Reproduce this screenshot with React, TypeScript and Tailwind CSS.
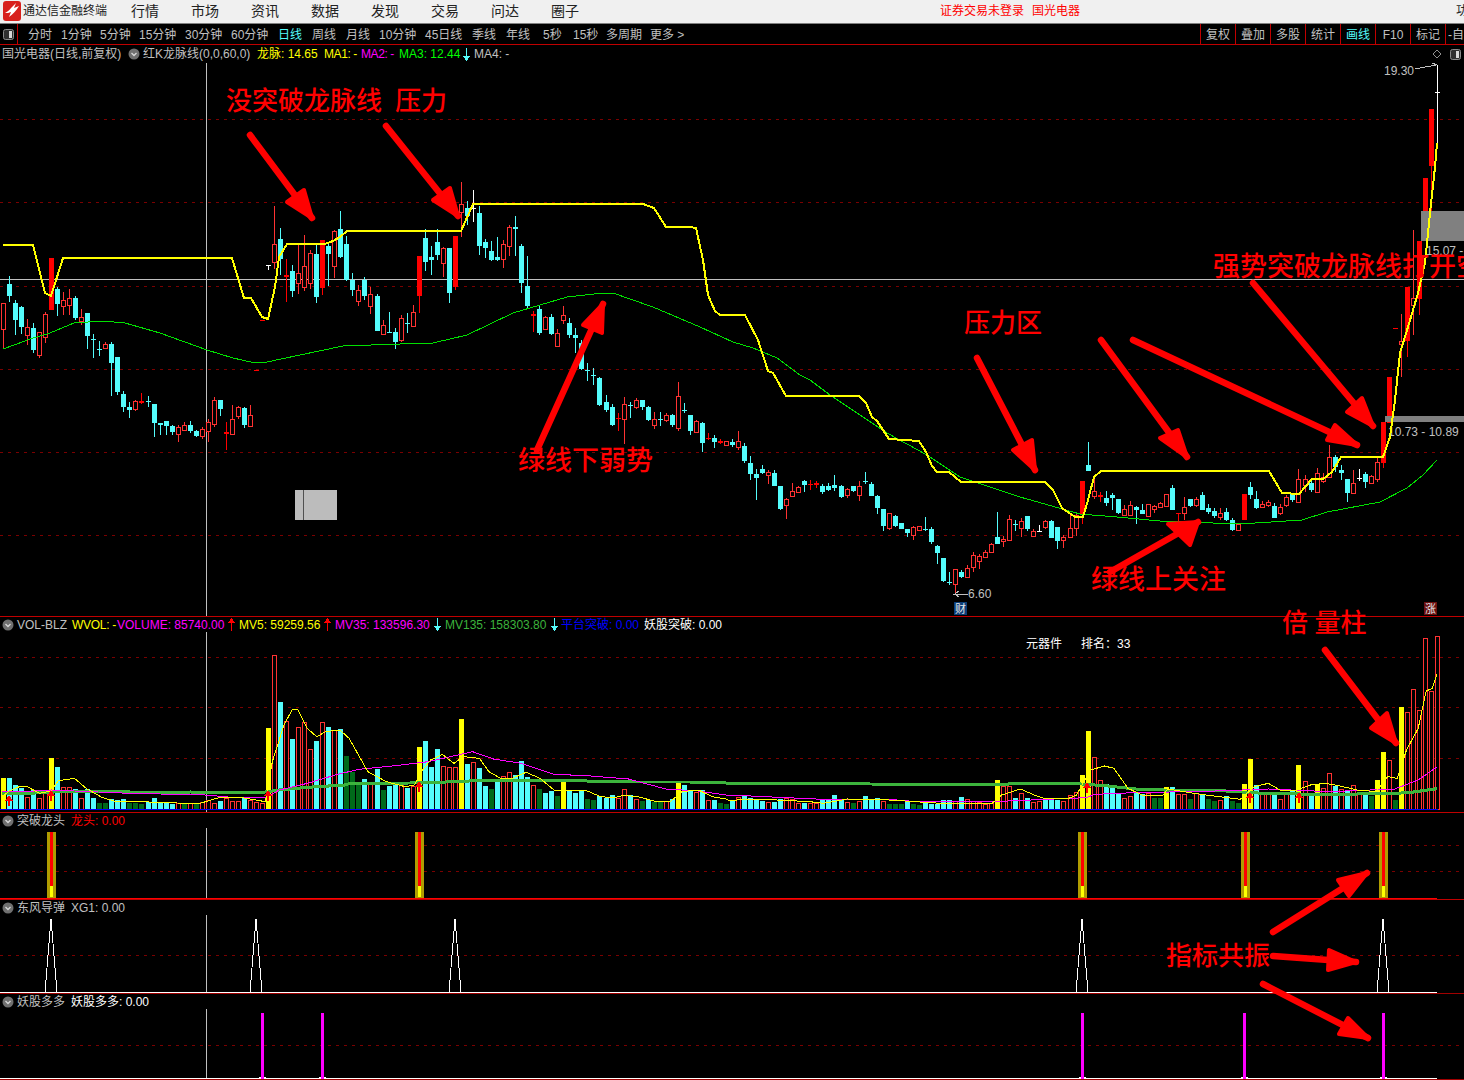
import React from "react";

type Row = [string, number, number, number, number];

const CYAN = "#54fcfc";
const HOLLOW = "#ff3232";
const GRID = "#7a0000";
const CROSS = "#c0c0c0";

// zoomed y values: y = base + v / 3
const groups: { base: number; rows: Row[] }[] = [
  {
    base: 180,
    rows: [
      ["r", 370, 448, 370, 508], ["c", 312, 348, 288, 365], ["c", 370, 420, 360, 465], ["c", 381, 440, 378, 462],
      ["r", 442, 465, 418, 495], ["c", 445, 510, 430, 520], ["r", 457, 524, 457, 533], ["r", 403, 470, 395, 488],
      ["R", 234, 390, 234, 390], ["c", 327, 372, 320, 408], ["r", 361, 377, 335, 405], ["r", 355, 374, 327, 405],
      ["c", 354, 414, 348, 420], ["r", 412, 422, 388, 435], ["c", 400, 468, 400, 507], ["c", 478, 480, 462, 533],
      ["c", 508, 510, 484, 528], ["r", 493, 503, 487, 507], ["c", 492, 548, 487, 648], ["c", 531, 636, 531, 645],
      ["c", 642, 681, 633, 696], ["c", 681, 690, 665, 714], ["r", 664, 686, 660, 692], ["R", 664, 668, 640, 672],
      ["c", 664, 666, 648, 680], ["c", 672, 729, 672, 771], ["c", 729, 735, 729, 765], ["c", 723, 738, 723, 765],
      ["c", 738, 756, 735, 765], ["r", 742, 761, 735, 786], ["r", 736, 749, 726, 752], ["c", 735, 753, 723, 758],
      ["c", 753, 768, 750, 770], ["r", 747, 767, 740, 777], ["r", 727, 752, 716, 786], ["r", 660, 732, 652, 741],
      ["c", 660, 687, 660, 708], ["R", 757, 763, 726, 810], ["r", 717, 762, 675, 762], ["r", 681, 708, 678, 717],
      ["c", 684, 735, 681, 744], ["r", 706, 738, 675, 738], ["R", 570, 573, 570, 573], ["R", 420, 423, 420, 423],
      ["w", 256, 258, 256, 270], ["r", 192, 245, 78, 267], ["c", 177, 237, 144, 285], ["R", 285, 291, 237, 366],
      ["c", 273, 333, 255, 351], ["r", 280, 308, 195, 342], ["r", 259, 320, 165, 333], ["r", 219, 308, 210, 327],
      ["c", 222, 351, 192, 369], ["R", 180, 324, 180, 345], ["c", 198, 222, 192, 318], ["r", 153, 258, 150, 294],
      ["c", 147, 231, 93, 234], ["c", 192, 300, 168, 303], ["c", 300, 330, 279, 348], ["r", 330, 362, 315, 378],
      ["c", 299, 348, 291, 360], ["r", 343, 377, 321, 402], ["c", 348, 453, 342, 453], ["r", 436, 461, 420, 461],
      ["c", 455, 457, 396, 457], ["c", 456, 486, 445, 507], ["r", 415, 479, 405, 485], ["c", 430, 432, 400, 460],
      ["r", 397, 438, 376, 440], ["R", 228, 347, 228, 399], ["c", 175, 245, 148, 273], ["c", 232, 240, 198, 285],
      ["c", 186, 225, 148, 240], ["r", 205, 250, 200, 291], ["c", 204, 339, 204, 369], ["R", 168, 321, 168, 330],
      ["r", 72, 95, 6, 171], ["c", 84, 108, 63, 135], ["w", 84, 86, 30, 126], ["c", 99, 198, 78, 225],
      ["c", 186, 204, 178, 234], ["c", 213, 240, 183, 243], ["c", 231, 240, 171, 243], ["r", 193, 236, 180, 264],
      ["r", 142, 199, 135, 228], ["c", 141, 147, 108, 228], ["c", 198, 309, 192, 339], ["c", 318, 378, 228, 385],
      ["R", 402, 407, 393, 456], ["c", 387, 459, 378, 465], ["r", 411, 447, 408, 450], ["c", 411, 462, 402, 465],
      ["r", 459, 497, 447, 497], ["r", 405, 420, 378, 432], ["c", 429, 465, 414, 474], ["c", 465, 473, 444, 520],
      ["c", 490, 567, 480, 570], ["c", 570, 573, 549, 603], ["c", 585, 588, 564, 615], ["c", 594, 675, 590, 678],
      ["c", 666, 690, 645, 696], ["c", 681, 735, 672, 738], ["R", 714, 718, 699, 753], ["r", 672, 718, 651, 792],
      ["c", 675, 678, 666, 714], ["r", 660, 680, 654, 687], ["c", 660, 681, 660, 690], ["c", 681, 720, 678, 723],
      ["r", 718, 735, 696, 747], ["c", 716, 719, 696, 738], ["r", 706, 720, 699, 726], ["c", 705, 735, 702, 741],
      ["r", 648, 744, 606, 753], ["c", 689, 692, 669, 699], ["c", 705, 753, 705, 765], ["r", 723, 756, 720, 756],
      ["c", 729, 789, 726, 816], ["R", 774, 778, 759, 780], ["c", 774, 786, 765, 804], ["R", 784, 788, 777, 792],
      ["r", 784, 794, 784, 794], ["c", 786, 794, 777, 800], ["r", 784, 801, 753, 810],
    ],
  },
  {
    base: 430,
    rows: [["c", 48, 93, 39, 99], ["c", 99, 132, 78, 150], ["c", 132, 144, 117, 210]],
  },
  {
    base: 380,
    rows: [
      ["c", 268, 280, 255, 282], ["r", 276, 286, 270, 312], ["c", 279, 318, 270, 318], ["c", 318, 387, 318, 390],
      ["r", 358, 375, 354, 417], ["r", 334, 347, 309, 347], ["r", 321, 336, 318, 339], ["c", 303, 315, 300, 336],
      ["R", 312, 316, 300, 330], ["R", 310, 314, 303, 324], ["c", 318, 336, 312, 342], ["c", 318, 330, 309, 333],
      ["c", 315, 324, 285, 333], ["c", 318, 351, 315, 354], ["r", 327, 345, 324, 354], ["c", 318, 333, 318, 336],
      ["r", 318, 346, 303, 363], ["c", 302, 305, 276, 312], ["c", 312, 348, 306, 348], ["c", 348, 384, 345, 402],
      ["c", 387, 438, 387, 453], ["r", 400, 444, 400, 450], ["c", 408, 438, 405, 441], ["c", 429, 447, 429, 447],
      ["c", 447, 459, 447, 471], ["r", 441, 465, 438, 480], ["r", 439, 449, 439, 449], ["c", 446, 449, 411, 453],
      ["c", 447, 486, 441, 492], ["c", 498, 519, 495, 552], ["c", 534, 603, 534, 606], ["c", 606, 609, 576, 615],
      ["r", 568, 613, 568, 640], ["c", 576, 591, 570, 594], ["r", 565, 590, 555, 590], ["r", 525, 560, 516, 576],
      ["r", 528, 543, 522, 566], ["r", 516, 531, 510, 534], ["r", 492, 517, 489, 519], ["c", 471, 492, 396, 492],
      ["r", 478, 484, 468, 500], ["r", 418, 480, 405, 480], ["c", 432, 435, 420, 453], ["r", 423, 444, 414, 471],
      ["c", 408, 447, 408, 452], ["r", 453, 467, 447, 468], ["w", 452, 455, 435, 455], ["r", 423, 442, 420, 448],
      ["c", 423, 474, 420, 474], ["c", 441, 483, 441, 507], ["r", 471, 481, 465, 504], ["r", 444, 471, 405, 471],
      ["r", 405, 444, 396, 468], ["R", 303, 405, 303, 432], ["c", 255, 273, 186, 273], ["r", 334, 348, 294, 357],
      ["R", 346, 351, 336, 366], ["c", 354, 369, 333, 378], ["c", 345, 354, 340, 390], ["c", 357, 399, 357, 402],
      ["r", 387, 405, 375, 405], ["r", 376, 404, 363, 405], ["c", 381, 390, 378, 432], ["c", 390, 402, 372, 402],
      ["r", 373, 408, 372, 408], ["r", 378, 386, 375, 399],
    ],
  },
  {
    base: 60,
    rows: [
      ["r", 1330, 1340, 1325, 1345], ["r", 1303, 1337, 1303, 1340], ["c", 1285, 1350, 1275, 1350], ["R", 1360, 1363, 1360, 1390],
      ["r", 1340, 1358, 1312, 1380], ["c", 1318, 1338, 1316, 1340], ["r", 1316, 1334, 1310, 1340], ["c", 1305, 1350, 1296, 1350],
      ["c", 1344, 1356, 1332, 1362], ["c", 1354, 1368, 1345, 1375], ["r", 1359, 1372, 1345, 1380], ["c", 1355, 1380, 1345, 1382],
      ["c", 1380, 1410, 1375, 1412], ["r", 1392, 1410, 1388, 1414], ["R", 1302, 1380, 1302, 1380], ["c", 1280, 1305, 1266, 1318],
      ["c", 1317, 1345, 1293, 1347], ["r", 1332, 1340, 1323, 1342], ["r", 1325, 1336, 1320, 1340], ["c", 1337, 1373, 1330, 1375],
      ["r", 1342, 1360, 1332, 1365], ["r", 1312, 1334, 1305, 1340], ["c", 1300, 1320, 1300, 1326], ["r", 1258, 1325, 1228, 1325],
      ["r", 1258, 1275, 1245, 1295], ["c", 1270, 1290, 1255, 1295], ["r", 1238, 1295, 1225, 1298], ["r", 1250, 1262, 1240, 1270],
      ["r", 1192, 1252, 1155, 1252], ["c", 1190, 1220, 1185, 1235], ["c", 1230, 1240, 1215, 1260], ["c", 1256, 1300, 1256, 1325],
      ["r", 1268, 1300, 1230, 1300], ["w", 1254, 1257, 1228, 1262], ["c", 1242, 1265, 1235, 1285], ["r", 1248, 1268, 1245, 1270],
      ["r", 1207, 1258, 1188, 1265], ["R", 1085, 1208, 1085, 1225], ["R", 951, 1090, 951, 1090], ["R", 803, 807, 803, 807],
      ["r", 842, 853, 762, 950], ["R", 681, 842, 681, 890], ["r", 715, 735, 510, 825], ["R", 543, 716, 543, 765],
      ["R", 353, 543, 353, 543], ["R", 148, 318, 148, 480], ["w", 96, 98, 15, 250],
    ],
  },
];

const candles = groups.flatMap((g) =>
  g.rows.map(([t, a, b, h, l]) => ({ t, top: g.base + a / 3, bot: g.base + b / 3, hi: g.base + h / 3, lo: g.base + l / 3 })),
);

const xAt = (i: number) => Math.floor(3.4 + 6.026 * i);

const vol =
  "y489 c489 c510 c520 r547 c525 r550 r525 y429 c456 r517 r517 c522 r550 c522 c548 g564 g564 c552 c556 c552 g563 g563 g566 c562 c548 c562 c562 c567 r564 g566 r565 g566 r560 r555 r565 c557 r550 r558 r558 c548 r556 r560 r565 y339 r121 c261 r318 c372 r336 r322 r402 c378 r322 c336 r345 c342 g423 g470 g500 c492 r500 c462 g525 c512 c510 r505 c518 r512 y396 c378 c455 c402 r453 r455 r457 y312 c446 r441 c460 c513 g522 c492 r483 r472 c480 c438 c486 r510 g522 c535 c528 g543 y500 c525 c533 c528 g552 g555 c542 c548 c540 r548 r522 c540 r552 g558 c555 g560 g562 r558 c552 y503 c510 c528 r530 c525 r556 c555 g565 g568 c558 r547 c543 c549 c551 c558 r561 c560 c552 r548 r551 r564 c564 r565 r564 c552 c551 c541 c555 r560 g564 r558 c544 c556 c549 r557 g566 g567 g568 c558 g568 g570 c565 c566 c566 c555 c556 r558 c546 r553 r558 r561 r567 r563 y495 r514 r514 c550 r534 c548 r561 r558 c550 c555 c555 r558 r540 r532 y480 y348 r427 r495 c507 c515 c537 r549 r544 c531 c537 r533 g548 g550 y516 c516 r538 r537 g552 r535 c541 g552 g558 r556 c544 g558 g564 y507 y432 c510 r533 r535 c537 r552 r530 c525 y450 r498 c543 y507 r520 r475 c514 r522 c526 r510 r530 c531 g543 y495 y411 r435 g555 y276 r291 r223 r285 r70 r228 r64"
    .split(" ")
    .map((s) => ({ t: s[0], top: 615 + Number(s.slice(1)) / 3 }));

const yellowMain =
  "3,245 33,245 45,293 51,296 63,258 232,258 244,298 251,298 262,317 268,319 275,287 279,257 287,244 325,244 333,241 340,237 347,231 461,231 473,204 643,204 654,208 666,227 690,227 696,228 703,260 708,295 715,311 720,315 745,315 758,340 768,371 773,373 786,396 859,396 866,403 872,417 877,421 889,439 919,441 926,452 932,466 937,472 949,472 961,482 1045,482 1053,490 1062,508 1075,517 1083,517 1088,500 1094,477 1101,471 1269,471 1282,493 1299,494 1312,479 1323,479 1332,472 1341,457 1383,457 1390,437 1395,400 1400,353 1408,327 1418,293 1425,263 1430,213 1435,167 1437,143";
const greenMain =
  "3,349 17,344 30,339 50,333 74,323 103,321 125,323 160,333 207,350 233,358 255,363 267,362 300,355 343,346 400,344 433,343 467,335 513,313 567,297 603,293 613,293 653,307 700,327 733,342 753,348 777,358 800,375 810,380 830,395 887,433 927,455 960,477 1020,497 1080,514 1117,517 1160,521 1240,524 1302,520 1327,512 1380,502 1407,488 1423,475 1437,460";

// vol lines are measured on the squeezed zoom crops, left part then right part
const zoomPts = (left: number[][], right: number[][]) =>
  [
    ...left.map(([x, y]) => [x / 2.148, 615 + y / 3]),
    ...right.map(([x, y]) => [730 + x / 2.136, 615 + y / 3]),
  ]
    .map((p) => p.join(","))
    .join(" ");

const mv5 = zoomPts(
  [[5,545],[20,528],[45,513],[60,516],[85,535],[110,528],[125,497],[160,490],[185,520],[220,548],[250,560],[300,560],[380,564],[430,565],[470,548],[520,548],[570,560],[585,440],[610,330],[628,283],[640,285],[660,340],[680,365],[700,350],[730,345],[750,370],[790,470],[830,500],[870,515],[890,510],[905,470],[925,435],[950,418],[975,445],[995,425],[1030,430],[1050,470],[1075,490],[1100,490],[1130,472],[1160,490],[1190,525],[1210,528],[1260,527],[1290,545],[1320,548],[1340,541],[1370,545],[1410,560],[1440,560],[1465,530],[1500,525],[1530,545],[1560,552]],
  [[0,558],[30,552],[100,555],[170,560],[200,565],[250,552],[340,555],[450,565],[560,565],[580,540],[620,522],[650,540],[670,550],[720,552],[740,540],[770,465],[800,453],[820,460],[850,520],[880,540],[925,540],[935,522],[990,535],[1045,545],[1090,553],[1120,515],[1150,505],[1175,525],[1210,525],[1240,510],[1270,505],[1300,512],[1340,525],[1380,530],[1405,485],[1425,490],[1445,405],[1470,340],[1487,228],[1500,220],[1510,178]],
);
const mv35 = zoomPts(
  [[5,530],[50,530],[110,525],[160,528],[280,535],[440,540],[490,546],[570,548],[600,525],[660,505],[720,480],[770,463],[850,452],[920,440],[1015,410],[1060,432],[1120,445],[1190,478],[1260,482],[1350,492],[1430,522],[1500,528],[1560,540]],
  [[0,540],[90,546],[200,553],[340,553],[400,560],[560,560],[760,548],[780,538],[880,532],[1000,530],[1150,522],[1280,530],[1420,522],[1470,495],[1510,456]],
);
const mv135 = zoomPts(
  [[5,536],[110,533],[120,530],[280,531],[290,533],[410,531],[420,534],[460,531],[570,531],[600,525],[660,517],[740,510],[750,506],[880,504],[985,500],[1020,497],[1260,498],[1360,501],[1480,501],[1560,504]],
  [[0,504],[185,504],[300,507],[580,510],[600,506],[740,506],[800,512],[880,524],[1060,528],[1150,536],[1280,538],[1400,536],[1450,533],[1510,521]],
);

const volArrows = [[9, 795], [51, 790], [268, 790], [419, 781], [1087, 782], [1250, 792], [1299, 792]];

const arrows = [
  [250, 135, 312, 218, 287, 202, 304, 190],
  [386, 126, 458, 216, 433, 200, 450, 188],
  [537, 450, 603, 304, 583, 325, 602, 333],
  [977, 358, 1035, 470, 1013, 450, 1032, 440],
  [1101, 340, 1187, 457, 1160, 438, 1178, 430],
  [1133, 340, 1357, 445, 1327, 440, 1335, 425],
  [1253, 283, 1373, 426, 1347, 412, 1362, 398],
  [1110, 572, 1198, 522, 1168, 524, 1190, 545],
  [1325, 650, 1396, 743, 1371, 728, 1387, 713],
  [1273, 932, 1367, 873, 1338, 880, 1349, 896],
  [1273, 956, 1356, 962, 1329, 950, 1328, 970],
  [1263, 984, 1368, 1038, 1339, 1034, 1348, 1018],
];

const notes = [
  { text: "没突破龙脉线  压力", cls: "left-[226px] top-[84px] text-[26px]" },
  { text: "压力区", cls: "left-[964px] top-[306px] text-[26px]" },
  { text: "绿线下弱势", cls: "left-[518px] top-[443px] text-[27px]" },
  { text: "强势突破龙脉线打开空", cls: "left-[1213px] top-[249px] text-[27px]" },
  { text: "绿线上关注", cls: "left-[1091px] top-[562px] text-[27px]" },
  { text: "倍 量柱", cls: "left-[1282px] top-[606px] text-[26px]" },
  { text: "指标共振", cls: "left-[1166px] top-[939px] text-[26px]" },
];

const periods = [
  ["分时", "w-[33px]"], ["1分钟", "w-[39px]"], ["5分钟", "w-[39px]"], ["15分钟", "w-[46px]"], ["30分钟", "w-[46px]"],
  ["60分钟", "w-[47px]"], ["日线", "w-[34px] text-[#54fcfc]"], ["周线", "w-[34px]"], ["月线", "w-[33px]"], ["10分钟", "w-[46px]"],
  ["45日线", "w-[47px]"], ["季线", "w-[34px]"], ["年线", "w-[37px]"], ["5秒", "w-[30px]"], ["15秒", "w-[33px]"],
  ["多周期", "w-[44px]"], ["更多 >", "w-[40px]"],
];
const tools = ["复权", "叠加", "多股", "统计", "画线", "F10", "标记"];

function Dots({ ys }: { ys: number[] }) {
  return (
    <>
      {ys.map((y) => (
        <line key={y} x1={0} x2={1464} y1={y + 0.5} y2={y + 0.5} stroke={GRID} strokeDasharray="3 5" />
      ))}
    </>
  );
}

function CrossLine({ top, bottom }: { top: number; bottom: number }) {
  return <rect x={206} y={top} width={1} height={bottom - top} fill={CROSS} />;
}

function Candles() {
  return (
    <g>
      {candles.map((c, i) => {
        const x = xAt(i);
        const color = c.t === "c" ? CYAN : c.t === "w" ? "#ffffff" : c.t === "R" ? "#ff0000" : HOLLOW;
        const bodyTop = Math.round(c.top);
        const h = Math.max(1, Math.round(c.bot) - bodyTop);
        return (
          <g key={i}>
            <rect x={x} y={c.hi} width={1} height={Math.max(1, c.lo - c.hi)} fill={color} />
            {c.t === "r" ? (
              <rect x={x - 1.5} y={bodyTop + 0.5} width={4} height={h} fill="#000" stroke={color} />
            ) : (
              <rect x={x - 2} y={bodyTop} width={5} height={h} fill={color} />
            )}
          </g>
        );
      })}
    </g>
  );
}

function VolBars() {
  return (
    <g>
      {vol.map((b, i) => {
        const x = xAt(i);
        const top = Math.round(b.top);
        if (b.t === "r") {
          return <rect key={i} x={x - 1.5} y={top + 0.5} width={4} height={809 - top} fill="#000" stroke={HOLLOW} />;
        }
        const fill = b.t === "y" ? "#ffff00" : b.t === "g" ? "#006a1a" : CYAN;
        return <rect key={i} x={x - 2} y={top} width={5} height={809 - top} fill={fill} />;
      })}
    </g>
  );
}

function ChevronDot() {
  return (
    <svg width="12" height="12" viewBox="0 0 12 12" className="shrink-0">
      <circle cx="6" cy="6" r="5.5" fill="#707070" />
      <path d="M3.5 5 L6 7.5 L8.5 5" fill="none" stroke="#d8d8d8" strokeWidth="1.3" />
    </svg>
  );
}

function SideIcon() {
  return (
    <svg width="11" height="11" viewBox="0 0 11 11" className="shrink-0">
      <rect x="0.5" y="0.5" width="10" height="10" rx="2" fill="#303030" stroke="#8a8a8a" />
      <rect x="6" y="2" width="3" height="7" fill="#d8d8d8" />
    </svg>
  );
}

function Diamond() {
  return (
    <svg width="10" height="10" viewBox="0 0 10 10" className="shrink-0">
      <path d="M5 1 L9 5 L5 9 L1 5 Z" fill="none" stroke="#909090" />
    </svg>
  );
}

function Trend({ up, color }: { up?: boolean; color: string }) {
  return (
    <svg width="7" height="13" viewBox="0 0 7 13" className="shrink-0" shapeRendering="crispEdges">
      <rect x="3" y={up ? 2 : 0} width="1" height="11" fill={color} />
      <polygon points={up ? "3.5,0 7,5 0,5" : "3.5,13 7,8 0,8"} fill={color} />
    </svg>
  );
}

function Logo() {
  return (
    <svg width="18" height="20" viewBox="0 0 18 20" className="shrink-0">
      <rect width="18" height="20" rx="3" fill="#d8201c" />
      <path d="M2 12 C5 10 7 9 8 7 L13 2 L11 7 L16 5 C13 10 10 13 6 16 L8 11 C6 12 4 12 2 12 Z" fill="#fff" />
    </svg>
  );
}

function App() {
  return (
    <div className="relative w-[1464px] h-[1080px] overflow-hidden bg-black flex flex-col text-xs text-[#c0c0c0] [font-family:'Liberation_Sans','Noto_Sans_CJK_SC',sans-serif]">
      {/* title bar */}
      <div className="h-[24px] shrink-0 flex items-center bg-[#f0f0f0] border-b border-[#808080] pl-[3px] pb-[2px] whitespace-nowrap text-[#222]">
        <Logo />
        <span className="ml-[2px] w-[108px] shrink-0">通达信金融终端</span>
        {["行情", "市场", "资讯", "数据", "发现", "交易", "问达", "圈子"].map((m) => (
          <span key={m} className="w-[60px] shrink-0 text-sm">{m}</span>
        ))}
        <span className="ml-[329px] w-[92px] shrink-0 text-[#ff0000]">证券交易未登录</span>
        <span className="text-[#ff0000]">国光电器</span>
        <span className="ml-auto w-[8px] overflow-hidden shrink-0">功</span>
      </div>

      {/* period toolbar */}
      <div className="h-[21px] shrink-0 flex items-center border-b border-[#c00000] whitespace-nowrap">
        <div className="h-full w-[18px] shrink-0 flex items-center justify-center border-r border-[#c00000]">
          <SideIcon />
        </div>
        <div className="flex pl-[10px] pt-[2px]">
          {periods.map(([label, cls]) => (
            <span key={label} className={`shrink-0 ${cls}`}>{label}</span>
          ))}
        </div>
        <div className="ml-auto w-[264px] shrink-0 h-full flex overflow-hidden">
          {tools.map((t) => (
            <span
              key={t}
              className={`w-[35px] shrink-0 flex items-center justify-center pt-[2px] border-l border-[#c00000] ${t === "画线" ? "text-[#54fcfc]" : ""}`}
            >
              {t}
            </span>
          ))}
          <span className="flex-1 border-l border-[#c00000] pl-[2px] pt-[2px] flex items-center">-自</span>
        </div>
      </div>

      {/* main candle panel */}
      <div className="relative h-[572px] shrink-0 border-b border-[#c00000]">
        <div className="h-[18px] flex items-center pl-[2px] whitespace-nowrap">
          <span className="w-[126px] shrink-0">国光电器(日线,前复权)</span>
          <span className="w-[15px] shrink-0"><ChevronDot /></span>
          <span className="w-[114px] shrink-0">红K龙脉线(0,0,60,0)</span>
          <span className="w-[67px] shrink-0 text-[#ffff00]">龙脉: 14.65</span>
          <span className="w-[37px] shrink-0 tracking-[-0.4px] text-[#ffff00]">MA1: -</span>
          <span className="w-[38px] shrink-0 tracking-[-0.4px] text-[#ff00ff]">MA2: -</span>
          <span className="w-[64px] shrink-0 text-[#00ff00]">MA3: 12.44</span>
          <span className="w-[11px] shrink-0"><Trend color="#54fcfc" /></span>
          <span className="w-[958px] shrink-0">MA4: -</span>
          <Diamond />
          <span className="ml-[8px]"><SideIcon /></span>
        </div>
        <svg width={1464} height={553} viewBox="0 63 1464 553" className="block" shapeRendering="crispEdges">
          <Dots ys={[119, 202, 286, 369, 452, 535]} />
          <CrossLine top={63} bottom={616} />
          <rect x={0} y={279} width={1464} height={1} fill={CROSS} />
          <Candles />
          <polyline points={greenMain} fill="none" stroke="#00e000" />
          <rect x={295} y={490} width={42} height={30} fill="#bcbcbc" />
          <rect x={303} y={490} width={1} height={30} fill="#505050" />
          <rect x={1421} y={211} width={43} height={30} fill="#808080" />
          <rect x={1385} y={416} width={79} height={6} fill="#808080" />
          <g fill="#c0c0c0" className="text-xs" shapeRendering="auto">
            <text x={1384} y={75}>19.30</text>
            <text x={1426} y={255}>15.07 -</text>
            <text x={1388} y={436}>10.73 - 10.89</text>
            <text x={968} y={598}>6.60</text>
          </g>
          <polyline points={yellowMain} fill="none" stroke="#ffff00" strokeWidth={2} />
          <polyline points="1415,69 1436,65 1432,63 1437,65" fill="none" stroke="#c0c0c0" />
          <polyline points="968,594 955,594 959,591 955,594 959,597" fill="none" stroke="#c0c0c0" />
          <rect x={954} y={602} width={13} height={13} fill="#0c3e78" />
          <rect x={1424} y={602} width={13} height={13} fill="#6a1010" />
          <g fill="#e8e8e8" fontSize={11} shapeRendering="auto">
            <text x={955} y={613}>财</text>
            <text x={1425} y={613}>涨</text>
          </g>
        </svg>
      </div>

      {/* volume panel */}
      <div className="relative h-[196px] shrink-0 border-b border-[#c00000]">
        <div className="h-[15px] flex items-center pl-[2px] whitespace-nowrap">
          <span className="w-[15px] shrink-0"><ChevronDot /></span>
          <span className="w-[55px] shrink-0">VOL-BLZ</span>
          <span className="w-[45px] shrink-0 tracking-[-0.3px] text-[#ffff00]">WVOL: -</span>
          <span className="w-[111px] shrink-0 text-[#ff00ff]">VOLUME: 85740.00</span>
          <span className="w-[11px] shrink-0"><Trend up color="#ff0000" /></span>
          <span className="w-[85px] shrink-0 text-[#ffff00]">MV5: 59259.56</span>
          <span className="w-[11px] shrink-0"><Trend up color="#ff0000" /></span>
          <span className="w-[99px] shrink-0 text-[#ff00ff]">MV35: 133596.30</span>
          <span className="w-[11px] shrink-0"><Trend color="#54fcfc" /></span>
          <span className="w-[106px] shrink-0 text-[#3cb43c]">MV135: 158303.80</span>
          <span className="w-[10px] shrink-0"><Trend color="#54fcfc" /></span>
          <span className="w-[83px] shrink-0 text-[#0000ff]">平台突破: 0.00</span>
          <span className="shrink-0 text-white">妖股突破: 0.00</span>
        </div>
        <svg width={1464} height={180} viewBox="0 632 1464 180" className="block" shapeRendering="crispEdges">
          <Dots ys={[657, 707, 758]} />
          <CrossLine top={632} bottom={812} />
          <VolBars />
          <rect x={0} y={809} width={1438} height={1} fill="#0000ff" />
          <polyline points={mv135} fill="none" stroke="#3cb43c" strokeWidth={3} />
          <polyline points={mv35} fill="none" stroke="#ff00ff" />
          <polyline points={mv5} fill="none" stroke="#ffff00" />
          {volArrows.map(([x, y]) => (
            <g key={x} fill="#ff0000">
              <polygon points={`${x},${y} ${x + 4},${y + 6} ${x - 4},${y + 6}`} />
              <rect x={x - 1} y={y + 5} width={2} height={6} />
            </g>
          ))}
          <g fill="#ffffff" className="text-xs" shapeRendering="auto">
            <text x={1026} y={648}>元器件</text>
            <text x={1081} y={648}>排名：33</text>
          </g>
        </svg>
      </div>

      {/* 突破龙头 */}
      <div className="relative h-[87px] shrink-0 border-b border-[#c00000]">
        <div className="h-[15px] flex items-center pl-[2px] whitespace-nowrap">
          <span className="w-[15px] shrink-0"><ChevronDot /></span>
          <span className="w-[54px] shrink-0">突破龙头</span>
          <span className="text-[#ff0000]">龙头: 0.00</span>
        </div>
        <svg width={1464} height={71} viewBox="0 828 1464 71" className="block" shapeRendering="crispEdges">
          <Dots ys={[845, 871]} />
          <CrossLine top={828} bottom={899} />
          {[47, 415, 1078, 1241, 1379].map((x) => (
            <g key={x}>
              <rect x={x} y={832} width={9} height={66} fill="#b09c00" />
              <rect x={x + 3} y={832} width={3} height={54} fill="#ff0000" />
              <rect x={x + 3} y={886} width={3} height={11} fill="#ffff00" />
            </g>
          ))}
          <rect x={0} y={898} width={1437} height={1} fill="#ff0000" />
        </svg>
      </div>

      {/* 东风导弹 */}
      <div className="relative h-[94px] shrink-0 border-b border-[#a00000]">
        <div className="h-[15px] flex items-center pl-[2px] whitespace-nowrap">
          <span className="w-[15px] shrink-0"><ChevronDot /></span>
          <span className="w-[54px] shrink-0">东风导弹</span>
          <span>XG1: 0.00</span>
        </div>
        <svg width={1464} height={78} viewBox="0 915 1464 78" className="block" shapeRendering="crispEdges">
          <Dots ys={[955]} />
          <CrossLine top={915} bottom={993} />
          {[51, 256, 455, 1082, 1383].map((x) => (
            <polyline key={x} points={`${x - 6},992 ${x},919 ${x + 6},992`} fill="none" stroke="#ffffff" />
          ))}
          <rect x={0} y={992} width={1437} height={1} fill="#ffffff" />
        </svg>
      </div>

      {/* 妖股多多 */}
      <div className="relative h-[86px] shrink-0 border-b border-[#a00000]">
        <div className="h-[15px] flex items-center pl-[2px] whitespace-nowrap">
          <span className="w-[15px] shrink-0"><ChevronDot /></span>
          <span className="w-[54px] shrink-0">妖股多多</span>
          <span className="text-white">妖股多多: 0.00</span>
        </div>
        <svg width={1464} height={70} viewBox="0 1009 1464 70" className="block" shapeRendering="crispEdges">
          <Dots ys={[1045]} />
          <CrossLine top={1009} bottom={1079} />
          <rect x={0} y={1078} width={1437} height={1} fill="#ffffff" />
          {[261, 321, 1081, 1243, 1382].map((x) => (
            <g key={x}>
              <rect x={x - 2} y={1077} width={7} height={1} fill="#ffffff" />
              <rect x={x} y={1013} width={3} height={66} fill="#ff00ff" />
            </g>
          ))}
        </svg>
      </div>

      {/* hand drawn marks on top of the charts */}
      <svg width={1464} height={1080} className="absolute inset-0 pointer-events-none">
        {arrows.map(([x1, y1, tx, ty, ax, ay, bx, by], i) => (
          <g key={i} fill="#ff0000" stroke="#ff0000" strokeLinecap="round" strokeLinejoin="round">
            <line x1={x1} y1={y1} x2={tx} y2={ty} strokeWidth={6.5} />
            <polygon points={`${tx},${ty} ${ax},${ay} ${bx},${by}`} strokeWidth={4} />
          </g>
        ))}
      </svg>
      {notes.map((n) => (
        <span
          key={n.text}
          className={`absolute whitespace-pre leading-[36px] text-[#ff0000] font-medium [font-family:'Liberation_Serif','Noto_Sans_CJK_SC',serif] ${n.cls}`}
        >
          {n.text}
        </span>
      ))}
    </div>
  );
}

export default App;
